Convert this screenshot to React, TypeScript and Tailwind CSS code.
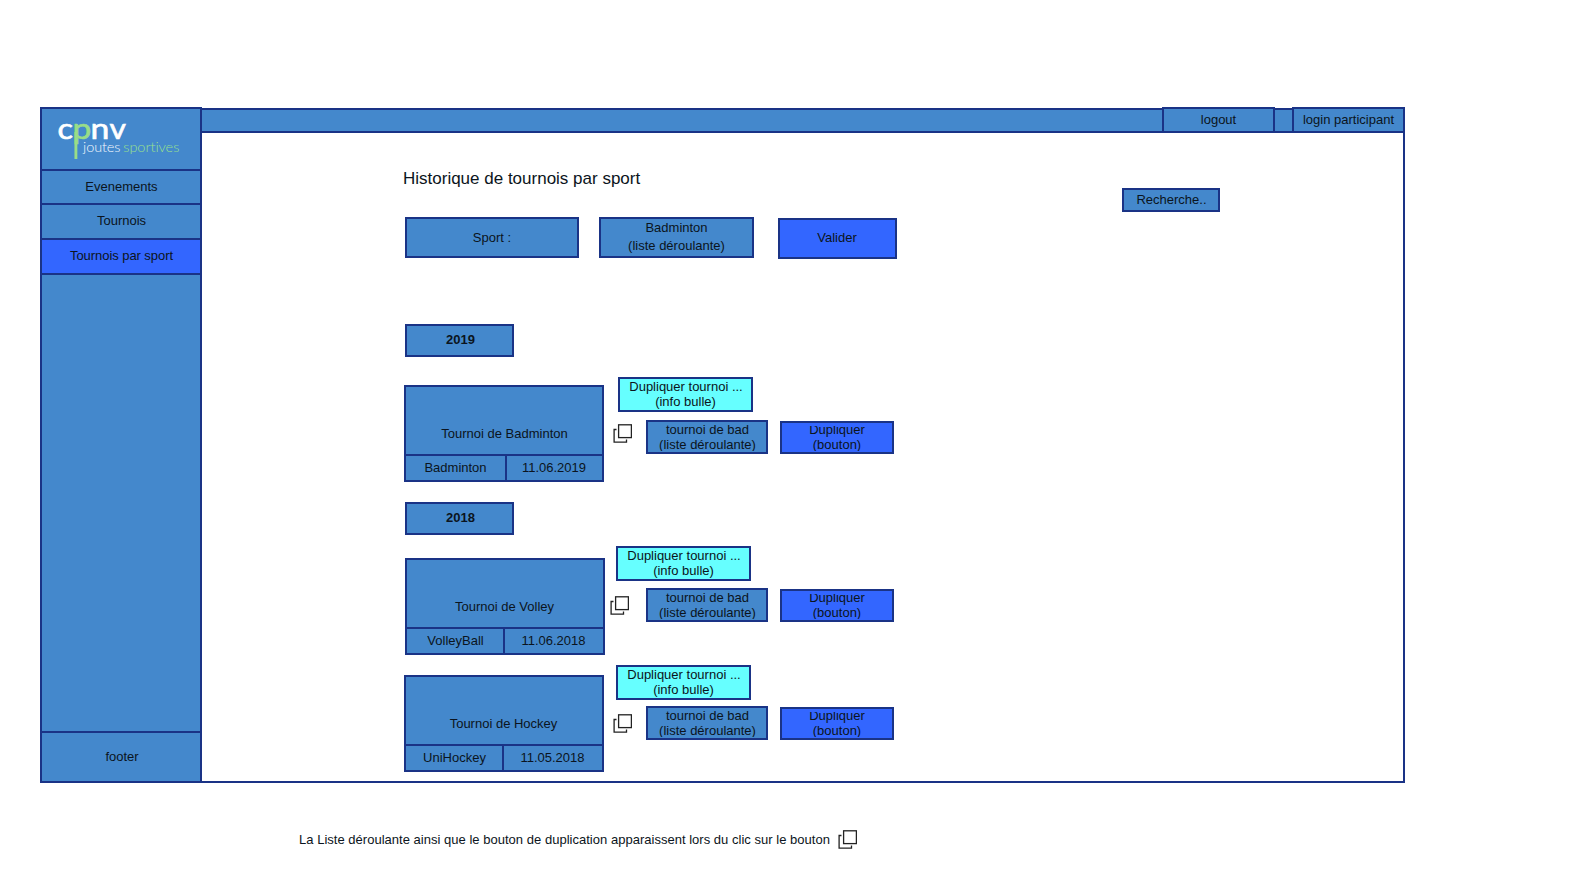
import type { ReactNode } from "react";
import clsx from "clsx";

function Box({ className, children }: { className?: string; children?: ReactNode }) {
  return (
    <div
      className={clsx(
        "flex shrink-0 flex-col items-center border-2 border-[#1a3386] whitespace-nowrap",
        className,
      )}
    >
      {children}
    </div>
  );
}

function CopyIcon({ className }: { className?: string }) {
  return (
    <svg width="19" height="19" viewBox="0 0 19 19" fill="none" className={clsx("shrink-0", className)}>
      <path d="M3.5 5.5H1.1V18.1H13.5V15.5" stroke="#222" strokeWidth="1.3" />
      <rect x="5.6" y="0.8" width="12.8" height="12.8" fill="#fff" stroke="#222" strokeWidth="1.3" />
    </svg>
  );
}

function Logo() {
  return (
    <svg
      width="158"
      height="60"
      viewBox="42 109 158 60"
      className="block font-['Lato',sans-serif] [font-variant-ligatures:none]"
    >
      <g fontSize="28" strokeWidth="0.6">
        <text x="57.6" y="139" fill="#fff" stroke="#fff" textLength="15.5" lengthAdjust="spacingAndGlyphs">c</text>
        <text x="72.5" y="139" fill="#99dd88" stroke="#99dd88" textLength="18.8" lengthAdjust="spacingAndGlyphs">p</text>
        <text x="90.6" y="139" fill="#fff" stroke="#fff" textLength="18.8" lengthAdjust="spacingAndGlyphs">n</text>
        <text x="109.5" y="139" fill="#fff" stroke="#fff" textLength="16.5" lengthAdjust="spacingAndGlyphs">v</text>
      </g>
      <path d="M75.9 132V159" stroke="#99dd88" strokeWidth="2.9" />
      <g fontSize="14.5" fontWeight="300">
        <text x="83" y="151.6" fill="#f4f9fd" textLength="37.5" lengthAdjust="spacing">joutes</text>
        <text x="123.3" y="151.6" fill="#99e08c" textLength="56" lengthAdjust="spacing">sportives</text>
      </g>
    </svg>
  );
}

type Tournament = {
  name: string;
  sport: string;
  date: string;
  row: string;
  card: string;
  title: string;
  sportCell: string;
  tip: string;
  controls: string;
  icon: string;
};

function TournamentRow({ t }: { t: Tournament }) {
  return (
    <div className={clsx("flex items-start", t.row)}>
      <div className={clsx("w-[202px] shrink-0", t.card)}>
        <Box className="h-[97px] w-[200px] bg-[#4488cc]">
          <div className={clsx("h-[67px] pt-[39px]", t.title)}>{t.name}</div>
          <div className="flex w-full flex-1 border-t-2 border-[#1a3386] text-center">
            <div className={clsx("border-r-2 border-[#1a3386] pt-1", t.sportCell)}>{t.sport}</div>
            <div className="flex-1 pt-1 pr-px">{t.date}</div>
          </div>
        </Box>
      </div>
      <div className="flex flex-col items-start">
        <Box className={clsx("h-[35px] w-[135px] bg-[#66ffff]", t.tip)}>
          <span className="pl-px">Dupliquer tournoi ...</span>
          <span>(info bulle)</span>
        </Box>
        <div className={clsx("flex items-start", t.controls)}>
          <div className="w-[42px] shrink-0">
            <CopyIcon className={t.icon} />
          </div>
          <Box className="h-[34px] w-[122px] bg-[#4488cc] pl-px">
            <div className="flex h-[29px] flex-col items-center overflow-hidden">
              <span>tournoi de bad</span>
              <span>(liste déroulante)</span>
            </div>
          </Box>
          <Box className="mt-px ml-3 h-[33px] w-[114px] bg-[#3366ff] pt-[3px]">
            <div className="flex h-[25px] flex-col items-center overflow-hidden">
              <span className="-mt-1">Dupliquer</span>
              <span>(bouton)</span>
            </div>
          </Box>
        </div>
      </div>
    </div>
  );
}

const badminton: Tournament = {
  name: "Tournoi de Badminton",
  sport: "Badminton",
  date: "11.06.2019",
  row: "mt-5",
  card: "pt-2 pl-0.5",
  title: "pl-px",
  sportCell: "w-[101px]",
  tip: "ml-[14px]",
  controls: "mt-2",
  icon: "mt-1 ml-[9px]",
};

const volley: Tournament = {
  name: "Tournoi de Volley",
  sport: "VolleyBall",
  date: "11.06.2018",
  row: "mt-[11px]",
  card: "pt-3 pl-[3px]",
  title: "pr-px",
  sportCell: "w-[98px] pl-px",
  tip: "ml-3",
  controls: "mt-[7px]",
  icon: "mt-2 ml-1.5",
};

const hockey: Tournament = {
  name: "Tournoi de Hockey",
  sport: "UniHockey",
  date: "11.05.2018",
  row: "mt-2.5",
  card: "pt-2.5 pl-0.5",
  title: "pr-px",
  sportCell: "w-[98px] pl-px",
  tip: "ml-3",
  controls: "mt-1.5",
  icon: "mt-2 ml-[9px]",
};

export default function App() {
  return (
    <div className="h-[875px] w-[1590px] overflow-hidden bg-white pt-[107px] pl-10 font-['Liberation_Sans',Arial,sans-serif] text-[13px] leading-[15px] text-[#0b1420]">
      <div className="flex h-[676px] w-[1365px]">
        <aside className="flex w-[162px] shrink-0 flex-col border-2 border-[#1a3386] bg-[#4488cc] text-center">
          <div className="h-[62px] border-b-2 border-[#1a3386]">
            <Logo />
          </div>
          <nav className="flex flex-1 flex-col">
            <a className="h-[34px] border-b-2 border-[#1a3386] pt-2 pl-px">Evenements</a>
            <a className="h-[35px] border-b-2 border-[#1a3386] pt-2 pl-px">Tournois</a>
            <a className="h-[35px] border-b-2 border-[#1a3386] bg-[#3366ff] pt-2 pl-px tracking-[-0.06px]">
              Tournois par sport
            </a>
          </nav>
          <footer className="h-[50px] border-t-2 border-[#1a3386] pt-4 pl-0.5">footer</footer>
        </aside>

        <div className="flex min-w-0 flex-1 flex-col">
          <header className="flex h-[26px] shrink-0">
            <div className="mt-px flex-1 border-y-2 border-[#1a3386] bg-[#4488cc]" />
            <Box className="w-[113px] bg-[#4488cc] pt-[3px]">logout</Box>
            <div className="mt-px w-[17px] border-y-2 border-[#1a3386] bg-[#4488cc]" />
            <Box className="w-[113px] bg-[#4488cc] pt-[3px]">login participant</Box>
          </header>

          <main className="flex-1 border-r-2 border-b-2 border-[#1a3386] pl-[200px]">
            <div className="flex h-[84px] items-start pt-9">
              <h1 className="w-[720px] pl-px text-[17px] leading-[19px]">Historique de tournois par sport</h1>
              <Box className="mt-[19px] h-6 w-[98px] bg-[#4488cc] pt-0.5 pl-px">Recherche..</Box>
            </div>

            <div className="flex h-[42px] items-start pl-[3px]">
              <Box className="h-[41px] w-[174px] bg-[#4488cc] pt-[11px]">Sport :</Box>
              <Box className="ml-5 h-[41px] w-[155px] gap-[3px] bg-[#4488cc] pt-px">
                <span>Badminton</span>
                <span>(liste déroulante)</span>
              </Box>
              <Box className="mt-px ml-6 h-[41px] w-[119px] bg-[#3366ff] pt-2.5 pr-px">Valider</Box>
            </div>

            <section className="pt-[65px]">
              <Box className="ml-[3px] h-[33px] w-[109px] bg-[#4488cc] pt-1.5 pl-0.5 font-bold">2019</Box>
              <TournamentRow t={badminton} />
            </section>
            <section className="pt-5">
              <Box className="ml-[3px] h-[33px] w-[109px] bg-[#4488cc] pt-1.5 pl-0.5 font-bold">2018</Box>
              <TournamentRow t={volley} />
              <TournamentRow t={hockey} />
            </section>
          </main>
        </div>
      </div>

      <div className="flex items-start pt-[47px] pl-[258px]">
        <p className="w-[540px] pt-0.5 pl-px tracking-[0.02px] whitespace-nowrap">
          La Liste déroulante ainsi que le bouton de duplication apparaissent lors du clic sur le bouton
        </p>
        <CopyIcon />
      </div>
    </div>
  );
}
